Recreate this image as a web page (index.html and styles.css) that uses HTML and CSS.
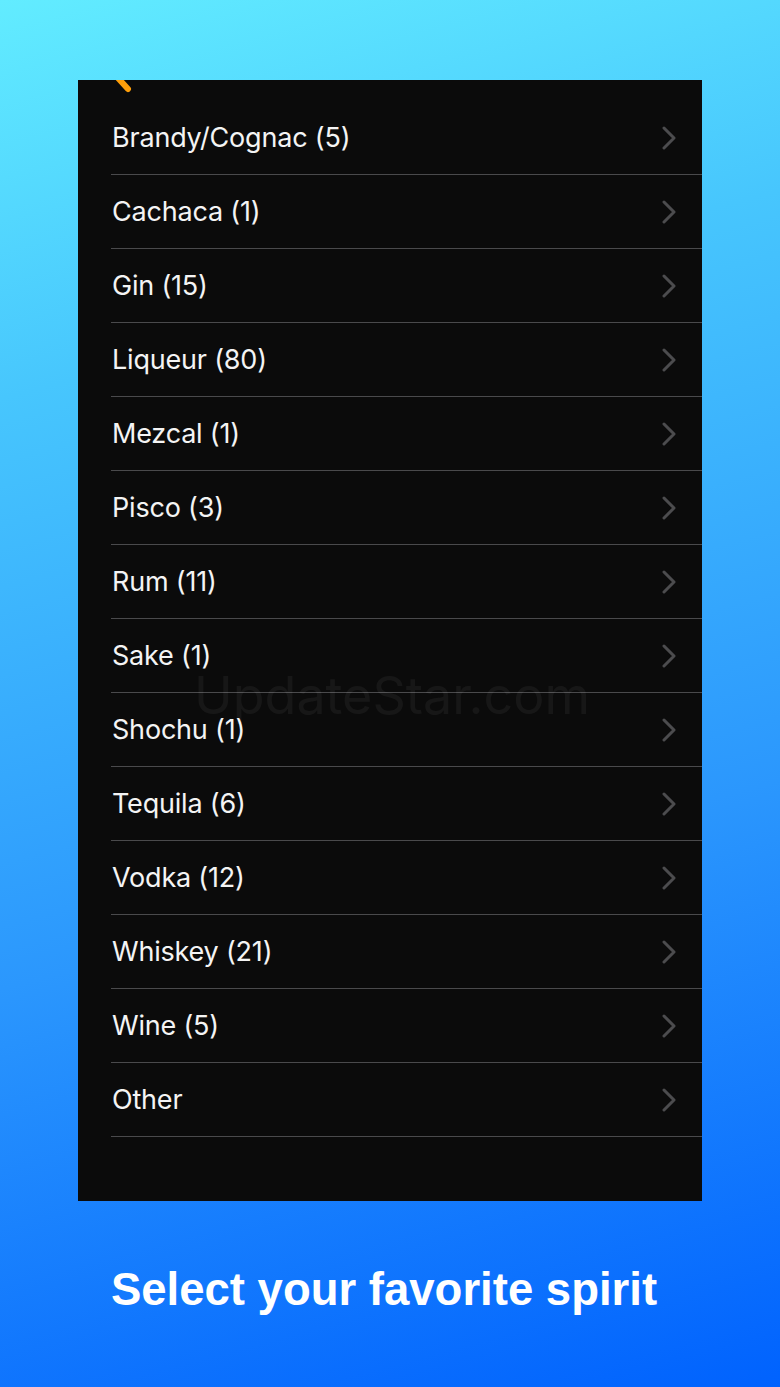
FILE: index.html
```html
<!DOCTYPE html>
<html lang="en">
<head>
    <meta charset="UTF-8">
    <meta name="viewport" content="width=device-width, initial-scale=1.0">
    <title>Spirits</title>
    <link rel="stylesheet" href="styles.css">
</head>
<body>
    <div class="device">
        <!-- bottom tip of the back button, clipped by the screen top -->
        <div class="nav">
            <svg class="back" width="40" height="21" viewBox="0 0 40 21">
                <path d="M22 -16 L8 -2 L18 9" fill="none" stroke="#ff9f0a" stroke-width="6" stroke-linecap="round"/>
            </svg>
        </div>

        <ul class="spirit-list">
            <li><span>Brandy/Cognac (5)</span><svg class="chev" viewBox="0 0 14 24"><path d="M2 2 L12 12 L2 22"/></svg></li>
            <li><span>Cachaca (1)</span><svg class="chev" viewBox="0 0 14 24"><path d="M2 2 L12 12 L2 22"/></svg></li>
            <li><span>Gin (15)</span><svg class="chev" viewBox="0 0 14 24"><path d="M2 2 L12 12 L2 22"/></svg></li>
            <li><span>Liqueur (80)</span><svg class="chev" viewBox="0 0 14 24"><path d="M2 2 L12 12 L2 22"/></svg></li>
            <li><span>Mezcal (1)</span><svg class="chev" viewBox="0 0 14 24"><path d="M2 2 L12 12 L2 22"/></svg></li>
            <li><span>Pisco (3)</span><svg class="chev" viewBox="0 0 14 24"><path d="M2 2 L12 12 L2 22"/></svg></li>
            <li><span>Rum (11)</span><svg class="chev" viewBox="0 0 14 24"><path d="M2 2 L12 12 L2 22"/></svg></li>
            <li><span>Sake (1)</span><svg class="chev" viewBox="0 0 14 24"><path d="M2 2 L12 12 L2 22"/></svg></li>
            <li><span>Shochu (1)</span><svg class="chev" viewBox="0 0 14 24"><path d="M2 2 L12 12 L2 22"/></svg></li>
            <li><span>Tequila (6)</span><svg class="chev" viewBox="0 0 14 24"><path d="M2 2 L12 12 L2 22"/></svg></li>
            <li><span>Vodka (12)</span><svg class="chev" viewBox="0 0 14 24"><path d="M2 2 L12 12 L2 22"/></svg></li>
            <li><span>Whiskey (21)</span><svg class="chev" viewBox="0 0 14 24"><path d="M2 2 L12 12 L2 22"/></svg></li>
            <li><span>Wine (5)</span><svg class="chev" viewBox="0 0 14 24"><path d="M2 2 L12 12 L2 22"/></svg></li>
            <li><span>Other</span><svg class="chev" viewBox="0 0 14 24"><path d="M2 2 L12 12 L2 22"/></svg></li>
        </ul>

        <div class="watermark">UpdateStar.com</div>
    </div>

    <footer class="caption">
        Select your favorite spirit
    </footer>
</body>
</html>
```
FILE: styles.css
```css
body {
    margin: 0;
    width: 780px;
    height: 1387px;
    overflow: hidden;
    background: linear-gradient(165deg, #62ecff 0%, #47c6fd 25%, #2b97fd 62%, #0062fe 100%);
    font-family: Inter, "Noto Sans", sans-serif;
}

.device {
    position: relative;
    margin: 80px 0 0 78px;
    width: 624px;
    height: 1121px;
    background: #0b0b0b;
    overflow: hidden;
}

.nav {
    height: 21px;
    overflow: hidden;
}

.back {
    display: block;
    margin-left: 32px;
}

.spirit-list {
    list-style: none;
    margin: 0;
    padding: 0;
}

.spirit-list li {
    display: flex;
    align-items: center;
    justify-content: space-between;
    height: 73px;
    margin-left: 33px;
    padding: 0 26px 0 1px;
    border-bottom: 1px solid #4a4a4c;
    color: #f4f4f4;
    font-size: 27px;
    letter-spacing: -0.2px;
}

.chev {
    display: block;
    width: 14px;
    height: 24px;
    fill: none;
    stroke: #4c4c4e;
    stroke-width: 3;
    stroke-linecap: round;
    stroke-linejoin: round;
}

/* faint stock-site mark over the list */
.watermark {
    position: absolute;
    left: 116px;
    top: 584px;
    font-size: 52px;
    color: rgba(255, 255, 255, 0.05);
    pointer-events: none;
}

.caption {
    height: 186px;
    display: flex;
    align-items: center;
    justify-content: center;
    color: #ffffff;
    font-family: "Liberation Sans", Arial, sans-serif;
    font-weight: bold;
    font-size: 45.5px;
    padding: 0 12px 8px 0;
    box-sizing: border-box;
}
```
